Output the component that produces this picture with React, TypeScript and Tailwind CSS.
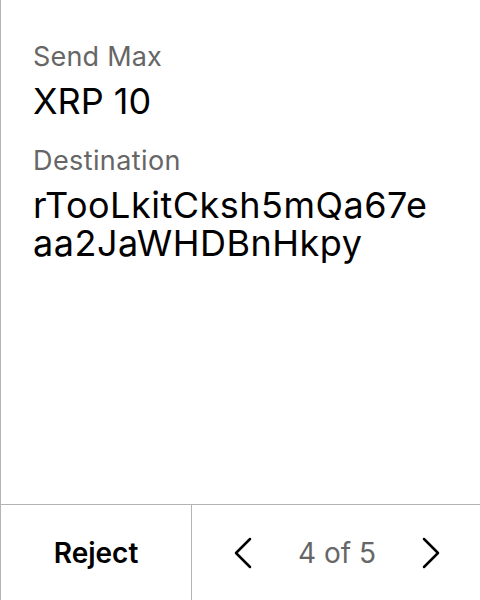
export default function App() {
  return (
    <div className="w-[480px] h-[600px] bg-white border-l border-[#b3b3b3] flex flex-col font-['Inter',sans-serif] text-black">
      <div className="flex-1 pl-8 pt-[41px]">
        <p className="text-[27px] leading-[32px] tracking-[0.2px] text-[#666]">Send Max</p>
        <p className="text-[36px] leading-[44px] mt-[6px]">XRP 10</p>
        <p className="text-[27px] leading-[32px] tracking-[0.4px] text-[#666] mt-[22px]">Destination</p>
        <p className="w-[406px] text-[36px] leading-[38px] tracking-[0.5px] mt-[9px] break-all">rTooLkitCksh5mQa67eaa2JaWHDBnHkpy</p>
      </div>
      <div className="h-[96px] border-t border-[#b3b3b3] flex">
        <button className="w-[191px] border-r border-[#b3b3b3] text-[28px] font-semibold">Reject</button>
        <div className="flex-1 flex items-center justify-between pl-[41px] pr-[39px]">
          <svg width="20" height="32" viewBox="0 0 20 32" fill="none" stroke="black" strokeWidth="2.5" strokeLinecap="round" strokeLinejoin="round">
            <path d="M17 2 L3 16 L17 30" />
          </svg>
          <span className="text-[28px] text-[#666]">4 of 5</span>
          <svg width="20" height="32" viewBox="0 0 20 32" fill="none" stroke="black" strokeWidth="2.5" strokeLinecap="round" strokeLinejoin="round">
            <path d="M3 2 L17 16 L3 30" />
          </svg>
        </div>
      </div>
    </div>
  );
}
